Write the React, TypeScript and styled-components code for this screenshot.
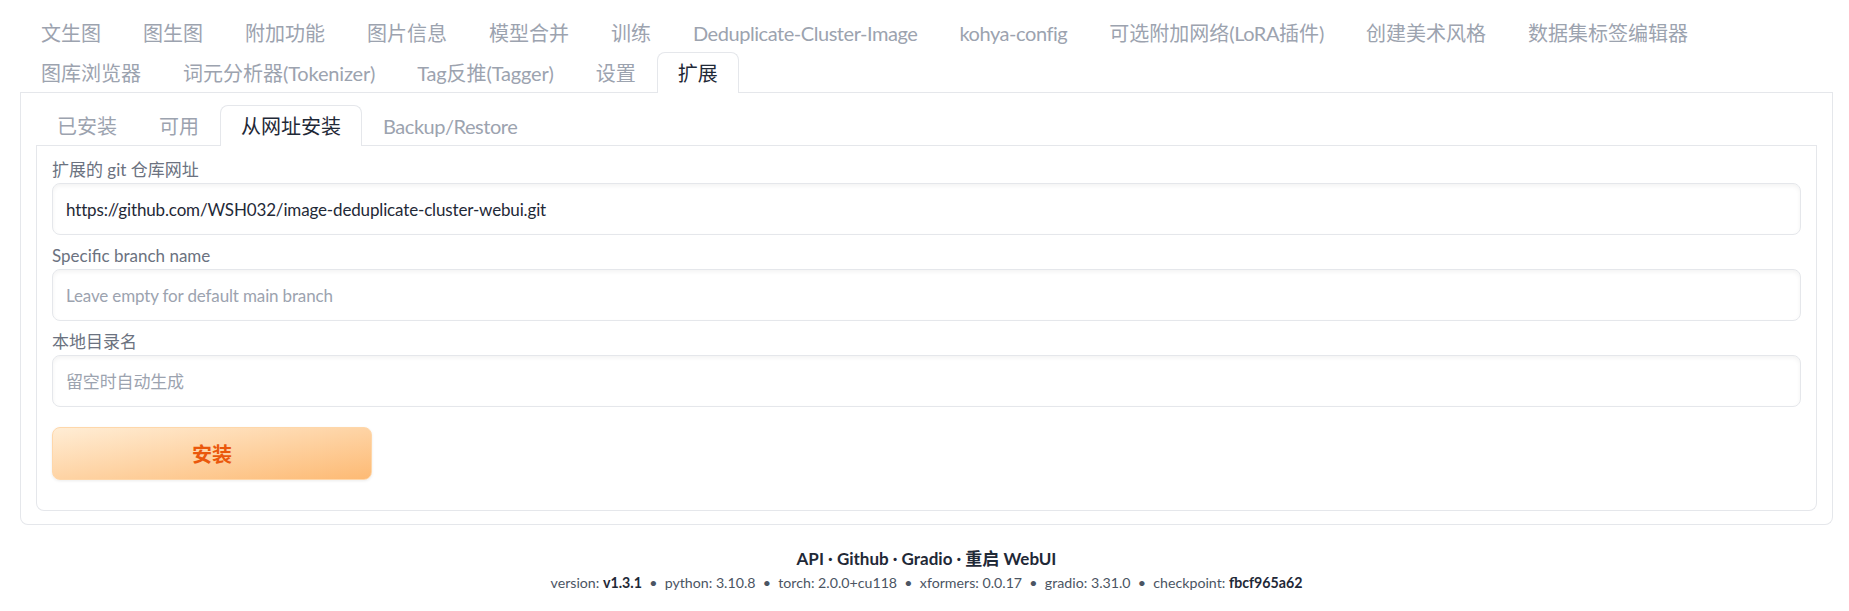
import React from "react";
import styled, { createGlobalStyle } from "styled-components";

const GlobalStyle = createGlobalStyle`
  html, body {
    margin: 0;
    padding: 0;
    background: #ffffff;
  }
  body {
    font-family: "Lato", "Noto Sans CJK SC", "Noto Sans", sans-serif;
    color: #1f2937;
  }
  * { box-sizing: border-box; }
`;

const Page = styled.div`
  padding: 12px 16px 0 20px;
`;

const TabNav = styled.div`
  display: flex;
  flex-wrap: wrap;
  border-bottom: 1px solid #e5e7eb;
`;

const TabButton = styled.button<{ $active?: boolean }>`
  appearance: none;
  font-family: inherit;
  font-size: 20px;
  line-height: 30px;
  padding: 5px 20px;
  margin: 0 0 -1px 0;
  height: 41px;
  border: 1px solid ${(p) => (p.$active ? "#e5e7eb" : "transparent")};
  border-bottom: none;
  border-radius: 8px 8px 0 0;
  background: ${(p) => (p.$active ? "#ffffff" : "transparent")};
  color: ${(p) => (p.$active ? "#1f2937" : "#9ca3af")};
  white-space: nowrap;
  cursor: pointer;
`;

const Latin = styled.span<{ $loose?: boolean }>`
  letter-spacing: ${(p) => (p.$loose ? "-0.18px" : "-0.45px")};
`;

const TabPanel = styled.div<{ $inner?: boolean }>`
  border: 1px solid #e5e7eb;
  border-top: none;
  border-radius: 0 0 8px 8px;
  padding: ${(p) => (p.$inner ? "13px 15px 30px" : "12px 15px 13px")};
  display: flex;
  flex-direction: column;
`;

const Form = styled.div`
  display: flex;
  flex-direction: column;
  gap: 10px;
`;

const Field = styled.label`
  display: flex;
  flex-direction: column;
  gap: 2px;
`;

const FieldLabel = styled.span`
  font-size: 17px;
  line-height: 22px;
  color: #6b7280;
`;

const TextInput = styled.input`
  height: 52px;
  width: 100%;
  padding: 0 13px;
  font-family: inherit;
  font-size: 17px;
  letter-spacing: -0.15px;
  color: #1f2937;
  background: #ffffff;
  border: 1px solid #e5e7eb;
  border-radius: 8px;
  box-shadow: inset 0 2px 4px 0 rgba(0, 0, 0, 0.05);
  outline: none;
  &::placeholder {
    color: #9ca3af;
  }
`;

const InstallButton = styled.button`
  margin-top: 20px;
  width: 320px;
  height: 53px;
  font-family: inherit;
  font-size: 20px;
  font-weight: 700;
  color: #ea580c;
  border: 1px solid #fed7aa;
  border-radius: 8px;
  background: linear-gradient(to bottom right, #ffedd5, #fdba74);
  box-shadow: 0 1px 3px 0 rgba(0, 0, 0, 0.08);
  cursor: pointer;
`;

const Footer = styled.footer`
  margin-top: 22px;
  display: flex;
  flex-direction: column;
  align-items: center;
`;

const FooterLinks = styled.div`
  font-size: 17px;
  line-height: 24px;
  font-weight: 700;
  color: #1f2937;
`;

const FooterLink = styled.a`
  color: inherit;
  text-decoration: none;
`;

const Versions = styled.div`
  font-size: 14.2px;
  line-height: 24px;
  color: #4b5563;
  white-space: pre;
`;

const Strong = styled.b`
  font-weight: 700;
  color: #1f2937;
`;

const topTabs = [
  "文生图",
  "图生图",
  "附加功能",
  "图片信息",
  "模型合并",
  "训练",
  "Deduplicate-Cluster-Image",
  "kohya-config",
  "可选附加网络(LoRA插件)",
  "创建美术风格",
  "数据集标签编辑器",
  "图库浏览器",
  "词元分析器(Tokenizer)",
  "Tag反推(Tagger)",
  "设置",
  "扩展",
];

const innerTabs = ["已安装", "可用", "从网址安装", "Backup/Restore"];

const sep = "  •  ";

function TabLabel({ text }: { text: string }) {
  const parts = text.match(/[\x20-\x7e]+|[^\x20-\x7e]+/g) || [];
  const mixed = parts.length > 1 && /[^\x20-\x7e]/.test(text) && !/LoRA/.test(text);
  return (
    <>
      {parts.map((p, i) =>
        /^[\x20-\x7e]+$/.test(p) ? (
          <Latin key={i} $loose={mixed}>
            {p}
          </Latin>
        ) : (
          <React.Fragment key={i}>{p}</React.Fragment>
        )
      )}
    </>
  );
}

export default function App() {
  return (
    <>
      <GlobalStyle />
      <Page>
        <TabNav>
          {topTabs.map((t) => (
            <TabButton key={t} $active={t === "扩展"}>
              <TabLabel text={t} />
            </TabButton>
          ))}
        </TabNav>
        <TabPanel>
          <TabNav>
            {innerTabs.map((t) => (
              <TabButton key={t} $active={t === "从网址安装"}>
                <TabLabel text={t} />
              </TabButton>
            ))}
          </TabNav>
          <TabPanel $inner>
            <Form>
              <Field>
                <FieldLabel>扩展的 git 仓库网址</FieldLabel>
                <TextInput
                  readOnly
                  value="https://github.com/WSH032/image-deduplicate-cluster-webui.git"
                />
              </Field>
              <Field>
                <FieldLabel>Specific branch name</FieldLabel>
                <TextInput readOnly placeholder="Leave empty for default main branch" />
              </Field>
              <Field>
                <FieldLabel>本地目录名</FieldLabel>
                <TextInput readOnly placeholder="留空时自动生成" />
              </Field>
            </Form>
            <InstallButton>安装</InstallButton>
          </TabPanel>
        </TabPanel>
        <Footer>
          <FooterLinks>
            <FooterLink href="#">API</FooterLink>
            {" · "}
            <FooterLink href="#">Github</FooterLink>
            {" · "}
            <FooterLink href="#">Gradio</FooterLink>
            {" · "}
            <FooterLink href="#">重启 WebUI</FooterLink>
          </FooterLinks>
          <Versions>
            version: <Strong>v1.3.1</Strong>
            {sep}python: 3.10.8{sep}torch: 2.0.0+cu118{sep}xformers: 0.0.17{sep}gradio: 3.31.0{sep}checkpoint: <Strong>fbcf965a62</Strong>
          </Versions>
        </Footer>
      </Page>
    </>
  );
}
